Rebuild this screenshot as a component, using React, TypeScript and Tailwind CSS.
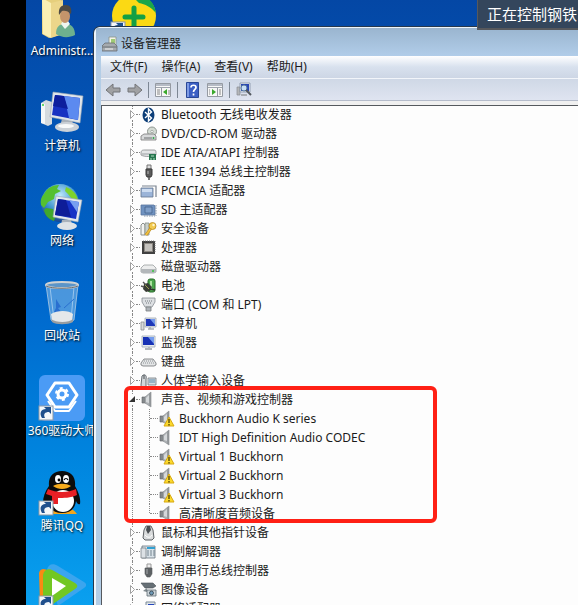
import React from 'react';
import clsx from 'clsx';

const ShortcutArrow = () => (
  <g>
    <rect x="1" y="32" width="14" height="14" fill="#f4f7fa" stroke="#8b98a5" />
    <path d="M4 44c-3-5-1-9 4-9l-2-2h7v7l-2-2c-4 0-6 2-4 6z" fill="#1f4f8c" />
  </g>
);

const UserFolder = () => (
  <>
    <path d="M4 4h15l6 3v33l-14 4-7-4z" fill="#e6cf7c" />
    <path d="M4 4l9 5v35l-8-4z" fill="#fbf0b4" />
    <path d="M13 9l12-3v34l-12 4z" fill="#ecd68a" />
    <path d="M18 40c0-7 3-10 9-10s10 3 10 11c-6 3-13 3-19-1z" fill="#6db08e" />
    <path d="M23 30l4 5 5-5-2-3h-5z" fill="#eef6f0" />
    <ellipse cx="27" cy="22" rx="5" ry="7" fill="#c4946b" />
    <path d="M21 21c-1-8 3-10 7-10 5 0 6 5 5 9-3-3-6-4-9-3z" fill="#4d4a44" />
  </>
);

const Computer = () => (
  <>
    <path d="M3 14l5-3 6 2v22l-4 2-7-3z" fill="#d5dade" />
    <path d="M3 14l4 1v20l-4-1z" fill="#f5f7f8" />
    <circle cx="5" cy="16" r="1" fill="#36d13c" />
    <path d="M24 30h10l1 7H22z" fill="#aab2bb" />
    <ellipse cx="29" cy="38" rx="12" ry="5" fill="#cbd1d7" />
    <ellipse cx="28" cy="37" rx="8" ry="2" fill="#f7f9fa" />
    <path d="M15 3l30 4-3 27-30-6z" fill="#dfe5ea" stroke="#9aa6b2" strokeWidth=".6" />
    <path d="M17 6l25 3-2 22-26-5z" fill="#1732c2" />
    <path d="M26 7l16 2-2 22-9-2z" fill="#5c8af0" />
    <path d="M17 6l9 1 4 13-15-3z" fill="#0d1e9d" />
  </>
);

const Network = () => (
  <>
    <defs>
      <radialGradient id="globe" cx=".5" cy=".3" r=".7">
        <stop offset="0" stopColor="#bfeafa" />
        <stop offset=".6" stopColor="#3b91cc" />
        <stop offset="1" stopColor="#17448f" />
      </radialGradient>
    </defs>
    <circle cx="22" cy="19" r="19" fill="url(#globe)" />
    <path d="M6 10C9 4 15 1 21 1l-2 4 4 2-6 3-1 5-6 3-4 6-3-3c-1-4 0-8 3-11z" fill="#55c030" />
    <path d="M28 3c6 2 11 7 12 13l-6-1-4-5-3-3z" fill="#7dd32c" />
    <path d="M8 24l7 1 3 6-2 6c-6-2-9-6-10-11z" fill="#40a82d" />
    <path d="M24 36h9l1 5H23z" fill="#aab2bb" />
    <ellipse cx="29" cy="42" rx="10" ry="4" fill="#dfe3e6" />
    <path d="M18 12l26 4-4 22-25-5z" fill="#e3e8ec" stroke="#98a5b0" strokeWidth=".6" />
    <path d="M20 15l21 3-3 17-21-4z" fill="#1733c6" />
    <path d="M20 15l8 1 5 17-16-2z" fill="#0e1d98" />
    <path d="M31 16l10 2-2 10z" fill="#779ff1" />
  </>
);

const RecycleBin = () => (
  <>
    <path d="M8 6l5 35c4 4 18 4 23 0l4-35z" fill="#a4d0f1" fillOpacity=".45" stroke="#c5d5e2" strokeWidth=".7" />
    <path d="M12 8l4 33M36 8l-3 33" stroke="#e6f2fb" strokeOpacity=".5" />
    <path d="M18 20l5 8-3 1 4 5-8-1 2-4z" fill="#2a6fd0" />
    <path d="M36 20l-10 9" stroke="#2a6fd0" />
    <path d="M13 35c6-4 18-4 22 0l-1 7c-5 3-15 3-20 0z" fill="#e5e8ea" />
    <path d="M13 40c5 4 18 4 22 0v3c-5 3-17 3-21 0z" fill="#989da1" />
    <ellipse cx="24" cy="6" rx="16" ry="3" fill="#5c95c8" stroke="#cfd2d3" strokeWidth="2" />
    <path d="M8 7c6 3 26 3 32 0" fill="none" stroke="#686e74" />
  </>
);

const DriverMaster = () => (
  <>
    <rect x="1" y="1" width="46" height="46" rx="6" fill="#4b9bf5" />
    <path d="M17 9h14l8 12-8 12H17L9 21z" fill="none" stroke="#fff" strokeWidth="3" strokeLinejoin="round" />
    <path d="M10 27l7 10h14l7-10" fill="none" stroke="#fff" strokeWidth="2" strokeLinejoin="round" />
    <circle cx="24" cy="20" r="4" fill="none" stroke="#fff" strokeWidth="3" />
    <circle cx="24" cy="20" r="6" fill="none" stroke="#fff" strokeWidth="2" strokeDasharray="3 3.3" />
    <ShortcutArrow />
  </>
);

const Penguin = () => (
  <>
    <path d="M12 44c3-3 8-3 12 0zM24 44c3-4 10-4 13 0z" fill="#f4a61c" stroke="#f4a61c" strokeWidth="2" />
    <path d="M24 2c9 0 14 6 13 15 3 5 6 12 5 18-2 1-3-1-4-3-1 8-6 12-14 12S11 40 9 32c-1 2-3 4-4 2 0-6 2-12 6-17C10 8 15 2 24 2z" fill="#0c0c0c" />
    <ellipse cx="25" cy="32" rx="11" ry="11" fill="#fff" />
    <path d="M10 20c8 4 20 4 28 0l1 6c-6 3-14 3-19 3v6h-6v-8l-6-2z" fill="#e71f25" />
    <ellipse cx="20" cy="10" rx="3" ry="4" fill="#fff" />
    <ellipse cx="28" cy="10" rx="3" ry="4" fill="#fff" />
    <circle cx="21" cy="11" r="1.4" />
    <path d="M26 11c1-2 3-2 4 0" fill="none" stroke="#000" strokeWidth="1.2" />
    <path d="M15 17c5-3 13-3 18 0-5 4-13 4-18 0z" fill="#f8ac1c" />
    <ShortcutArrow />
  </>
);

const VideoPlayer = () => (
  <>
    <path d="M9 6c1-6 6-7 11-4l26 16c3 2 3 4 0 6L20 42z" fill="#3ba5ee" />
    <path d="M1 9c1-5 6-5 9-2l4 34H2z" fill="#f98a13" />
    <path d="M5 11c1-6 6-7 11-4l21 12c3 2 3 4 0 6L12 42c-4 1-7 0-7-4z" fill="#72c723" />
    <path d="M14 14l14 8-14 10z" fill="#fff" />
    <ShortcutArrow />
  </>
);

const desktopItems = [
  { label: 'Administr...', icon: <UserFolder /> },
  { label: '计算机', icon: <Computer /> },
  { label: '网络', icon: <Network /> },
  { label: '回收站', icon: <RecycleBin /> },
  { label: '360驱动大师', icon: <DriverMaster /> },
  { label: '腾讯QQ', icon: <Penguin /> },
];

// 16x16 device class glyphs
const deviceIcons: Record<string, React.ReactNode> = {
  bluetooth: (
    <>
      <ellipse cx="7.5" cy="8" rx="6" ry="7.5" fill="#0d3e78" />
      <path d="M4 5l6.5 6-3 3V2l3 3L4 11" fill="none" stroke="#fff" strokeWidth="1.4" />
    </>
  ),
  disc: (
    <>
      <circle cx="11" cy="5.5" r="4.5" fill="#d4dbd4" stroke="#8e9690" />
      <circle cx="11" cy="5.5" r="1.2" fill="#fff" stroke="#7c857e" strokeWidth=".6" />
      <path d="M0 10l3-2h10l2 2v4H0z" fill="#d7d9da" stroke="#777" strokeWidth=".8" />
      <path d="M3 12h8" stroke="#6c7073" />
      <circle cx="12.5" cy="12" r="1" fill="#2fa54a" />
    </>
  ),
  ide: (
    <>
      <path d="M0 8c0-3 2-3 4-3h9c2 0 2 1 2 3v2c-3 2-12 2-15 0z" fill="#e4e6e7" stroke="#85898c" strokeWidth=".8" />
      <path d="M1 9h13" stroke="#9ba0a3" />
      <path d="M8 9h7v6H8z" fill="#27764f" />
      <path d="M10 13v2M13 13v2M10 11h3" stroke="#b4dfc3" />
    </>
  ),
  firewire: (
    <>
      <path d="M6 1h4v4H6z" fill="#ddd" stroke="#777" />
      <path d="M5 5h6v6l-1 2H6l-1-2z" fill="#5b5b5b" stroke="#3b3b3b" />
      <path d="M8 13v3" stroke="#555" strokeWidth="1.6" />
      <path d="M7 7v3" stroke="#bbb" />
    </>
  ),
  card: (
    <>
      <path d="M1 3h14v11" fill="none" stroke="#7b8490" strokeWidth="1.2" />
      <path d="M0 5h12v9H0z" fill="#9bb4d8" stroke="#62748e" strokeWidth=".8" />
      <path d="M1 6h10v3H1z" fill="#cddcf0" />
    </>
  ),
  sd: (
    <>
      <path d="M0 3h13l1 1v9H0z" fill="#6f92c0" stroke="#58759d" strokeWidth=".8" />
      <path d="M4 5h7v6H4z" fill="#7f9fc9" stroke="#3c5a82" strokeWidth=".7" />
      <path d="M15 3v11M3 14h11" stroke="#8797ab" strokeDasharray="1.5 1" />
    </>
  ),
  security: (
    <>
      <path d="M0 14h4V4L2 2 0 4z" fill="#f3f4f2" stroke="#8d918d" />
      <path d="M4 2h4v12H4z" fill="#c9d0cb" stroke="#868d88" strokeWidth=".8" />
      <path d="M10 7l-5 7" stroke="#b98a20" strokeWidth="3" />
      <path d="M10 7l-5 7" stroke="#f0c040" strokeWidth="1.8" />
      <circle cx="11.5" cy="5" r="3.5" fill="#f3cb4f" stroke="#b98a20" strokeWidth=".8" />
      <circle cx="12.5" cy="4" r="1.2" fill="#fff6cf" />
    </>
  ),
  cpu: (
    <>
      <rect x="1" y="1" width="13" height="13" fill="#404040" />
      <rect x="3.500" y="3.500" width="8" height="8" fill="#c4c2be" stroke="#8a8680" />
      <path d="M2 1h12v12" fill="none" stroke="#777" strokeDasharray="1 1" />
    </>
  ),
  drive: (
    <>
      <path d="M0 9l3-3h9l3 3v4l-2 1H2l-2-1z" fill="#eceded" stroke="#9b9ea0" strokeWidth=".8" />
      <path d="M0 10h15v3l-2 1H2l-2-1z" fill="#b3b7ba" />
      <circle cx="12" cy="12" r="1" fill="#36c43d" />
    </>
  ),
  battery: (
    <>
      <rect x="7" y="1" width="7" height="13" rx="2" fill="#4ba74c" stroke="#2b6b2d" />
      <path d="M9 3h2v8H9z" fill="#abe2a0" />
      <path d="M3 6l4-1 4 4-2 4-4 1-3-3z" fill="#383d35" />
      <path d="M2 4l3 3M0 8l3 1" stroke="#555" strokeWidth="1.4" />
      <path d="M4 7l4 4" stroke="#9b9b50" />
      <path d="M9 11l5 1" stroke="#2d322c" strokeWidth="1.4" />
    </>
  ),
  port: (
    <>
      <path d="M1 1h13v4l-3 5H4L1 5z" fill="#dcdfe2" stroke="#868c92" strokeWidth=".8" />
      <path d="M4 4h8M5 6h6" stroke="#747a80" strokeDasharray="1 1" />
      <path d="M5 10h5v4H5z" fill="#aeb3b8" stroke="#787d82" strokeWidth=".8" />
    </>
  ),
  computer: (
    <>
      <path d="M0 6h3v8H0z" fill="#d8dadb" stroke="#898c90" strokeWidth=".8" />
      <path d="M4 2h11v9H4z" fill="#e5e7ea" stroke="#9da6b1" strokeWidth=".8" />
      <path d="M5 3h9v7H5z" fill="#1e37b8" />
      <path d="M9 3h5v6z" fill="#7399ec" />
      <path d="M7 13h6M9 11v2" stroke="#a8adb2" strokeWidth="1.5" />
    </>
  ),
  monitor: (
    <>
      <path d="M1 1h13v11H1z" fill="#e8ebee" stroke="#9ca8b5" strokeWidth=".8" />
      <path d="M2 2h11v8H2z" fill="#1732b5" />
      <path d="M7 2h6v7z" fill="#739bed" />
      <path d="M4 14h7M8 12v2" stroke="#b2b7bc" strokeWidth="1.8" />
    </>
  ),
  keyboard: (
    <>
      <path d="M0 9l3-4h9l3 4v2l-2 1H2l-2-1z" fill="#e3e5e6" stroke="#6e7275" strokeWidth=".8" />
      <path d="M3 7h10M2 9h12" stroke="#8b9094" strokeDasharray="1 1" />
    </>
  ),
  hid: (
    <>
      <path d="M1 3c3-3 5 0 4 3v8c-2 2-5 0-5-2z" fill="#d3d7da" stroke="#686e73" />
      <path d="M3 2v4" stroke="#454a4e" />
      <path d="M7 5h8v7H7z" fill="#d4dbe1" stroke="#71797f" strokeWidth=".8" />
      <path d="M8 7h6M8 9h6" stroke="#5b89a8" />
      <path d="M7 14h8" stroke="#848b90" />
    </>
  ),
  sound: (
    <>
      <path d="M1 5h4v6H1z" fill="#85898c" stroke="#5e6265" strokeWidth=".6" />
      <path d="M4 5l6-5v15l-6-4z" fill="#adb1b4" stroke="#84888b" strokeWidth=".6" />
      <path d="M5 6l3-3v8l-3-1z" fill="#d5d8da" />
      <path d="M9 1v13" stroke="#82868a" />
    </>
  ),
  mouse: (
    <>
      <path d="M5 1h5l2 4 1 8-2 2H4l-2-2 1-8z" fill="#dadcdd" stroke="#5d6164" />
      <path d="M6 1L5 5l2 4 3-4-1-4z" fill="#494e52" />
      <path d="M4 10c2 3 6 3 7 0" fill="none" stroke="#fff" />
    </>
  ),
  modem: (
    <>
      <path d="M1 2h13v12H1z" fill="#d9e2e8" stroke="#67747d" strokeWidth=".8" />
      <path d="M0 4h5v10H0z" fill="#dce1e5" stroke="#6e777d" strokeWidth=".7" />
      <path d="M6 4h8" stroke="#31a0d2" strokeWidth="2" />
      <path d="M6 7h8M6 9h8M6 11h8" stroke="#74848f" strokeDasharray="2 1" />
    </>
  ),
  usb: (
    <>
      <path d="M6 1h4v4H6z" fill="#eee" stroke="#999" />
      <path d="M4 5h7v6l-2 3H6l-2-3z" fill="#5d6164" stroke="#595c5e" strokeWidth=".6" />
      <path d="M6 6v5" stroke="#a8acae" />
    </>
  ),
  imaging: (
    <>
      <path d="M0 1h12l3 3-3 2H4z" fill="#666f75" stroke="#4b5358" strokeWidth=".6" />
      <path d="M2 9l4-3v4z" fill="#7f888d" />
      <path d="M6 8h9v6H6z" fill="#ccd4d9" stroke="#5e6971" strokeWidth=".8" />
      <circle cx="10.500" cy="11" r="2" fill="#6e9ab8" stroke="#222f38" strokeWidth=".7" />
    </>
  ),
  network: (
    <>
      <path d="M5 1h9v8H5z" fill="#dfe5ea" stroke="#7d8b98" />
      <path d="M7 3h6v4H7z" fill="#2546bd" />
      <path d="M1 7h9v7H1z" fill="#dfe5ea" stroke="#7d8b98" />
    </>
  ),
};

type Category = {
  icon: string;
  label: string;
  children?: { label: string; warning?: boolean }[];
};

const categories: Category[] = [
  { icon: 'bluetooth', label: 'Bluetooth 无线电收发器' },
  { icon: 'disc', label: 'DVD/CD-ROM 驱动器' },
  { icon: 'ide', label: 'IDE ATA/ATAPI 控制器' },
  { icon: 'firewire', label: 'IEEE 1394 总线主控制器' },
  { icon: 'card', label: 'PCMCIA 适配器' },
  { icon: 'sd', label: 'SD 主适配器' },
  { icon: 'security', label: '安全设备' },
  { icon: 'cpu', label: '处理器' },
  { icon: 'drive', label: '磁盘驱动器' },
  { icon: 'battery', label: '电池' },
  { icon: 'port', label: '端口 (COM 和 LPT)' },
  { icon: 'computer', label: '计算机' },
  { icon: 'monitor', label: '监视器' },
  { icon: 'keyboard', label: '键盘' },
  { icon: 'hid', label: '人体学输入设备' },
  {
    icon: 'sound',
    label: '声音、视频和游戏控制器',
    children: [
      { label: 'Buckhorn Audio K series', warning: true },
      { label: 'IDT High Definition Audio CODEC' },
      { label: 'Virtual 1 Buckhorn', warning: true },
      { label: 'Virtual 2 Buckhorn', warning: true },
      { label: 'Virtual 3 Buckhorn', warning: true },
      { label: '高清晰度音频设备' },
    ],
  },
  { icon: 'mouse', label: '鼠标和其他指针设备' },
  { icon: 'modem', label: '调制解调器' },
  { icon: 'usb', label: '通用串行总线控制器' },
  { icon: 'imaging', label: '图像设备' },
  { icon: 'network', label: '网络适配器' },
];

const menus = ['文件(F)', '操作(A)', '查看(V)', '帮助(H)'];

const DeviceIcon = ({ name, warning }: { name: string; warning?: boolean }) => (
  <svg viewBox="0 0 16 16" className="size-4 shrink-0 overflow-visible" aria-hidden="true">
    {deviceIcons[name]}
    {warning && (
      <g>
        <path d="M10 6l5 9H5z" fill="#fbd92c" stroke="#d8a810" strokeLinejoin="round" />
        <path d="M10 8v4M10 13v1.500" stroke="#3f3400" strokeWidth="1.2" />
      </g>
    )}
  </svg>
);

const CategoryRow = ({ item }: { item: Category }) => {
  const open = !!item.children;
  return (
    <li role="treeitem" aria-expanded={open} className="relative">
      <div className="flex h-[19px] items-center whitespace-nowrap">
        <button aria-label={item.label} className="flex h-full w-[7px] flex-col items-center">
          <span className="w-0 flex-1 border-l border-dotted border-[#888]" />
          <svg viewBox="0 0 7 11" className="h-[11px] w-[7px] shrink-0" aria-hidden="true">
            {open ? (
              <path d="M6 2v6H0z" fill="#333" />
            ) : (
              <path d="M1.500 1.500l4 4-4 4z" fill="#fff" stroke="#a0a0a0" />
            )}
          </svg>
          <span className="w-0 flex-1 border-l border-dotted border-[#888]" />
        </button>
        <span className="mr-px w-1 border-t border-dotted border-[#888]" />
        <DeviceIcon name={item.icon} />
        <span className="pl-1">{item.label}</span>
      </div>
      {item.children && (
        <>
          <ul role="group" className="ml-[3px] border-l border-dotted border-[#888] pl-4">
            {item.children.map((child, i) => (
              <li key={child.label} role="treeitem" className="flex h-[19px] items-center whitespace-nowrap">
                <span
                  className={clsx(
                    'self-start border-l border-dotted border-[#888]',
                    i === item.children!.length - 1 ? 'h-[9px]' : 'h-full',
                  )}
                />
                <span className="mr-px w-2 border-t border-dotted border-[#888]" />
                <DeviceIcon name="sound" warning={child.warning} />
                <span className="pl-1">{child.label}</span>
              </li>
            ))}
          </ul>
          {/* marker frame around the audio devices */}
          <div className="pointer-events-none absolute -top-1 bottom-0 -left-[5px] w-[313px] rounded-md border-4 border-[#ff2015]" />
        </>
      )}
    </li>
  );
};

const ArrowIcon = ({ flip }: { flip?: boolean }) => (
  <svg viewBox="0 0 16 14" className={clsx('h-[14px] w-4', flip && 'rotate-180')} aria-hidden="true">
    <path d="M1 7l7-6v4h7v4H8v4z" fill="#a0a1a3" stroke="#737578" strokeLinejoin="round" />
  </svg>
);

const PaneIcon = ({ right }: { right?: boolean }) => (
  <svg viewBox="0 0 16 14" className="h-[14px] w-4" aria-hidden="true">
    <path d="M.5.5h15v13H.5z" fill="#f7f7f7" stroke="#959aa2" />
    <path d="M1 2h14" stroke="#b5bbc5" strokeWidth="2" />
    <path d="M1 4.500h14" stroke="#9ea4ad" />
    {right ? (
      <>
        <path d="M10.500 5v8" stroke="#959aa2" />
        <path d="M12 7h2M12 9h2M12 11h2M2 7h1M2 9h1M2 11h1" stroke="#888" />
        <path d="M5 6l4 3-4 3z" fill="#3aa82c" />
      </>
    ) : (
      <>
        <path d="M6.500 5v8" stroke="#959aa2" />
        <path d="M2 7h3M2 9h3M2 11h3M14 7v5" stroke="#888" />
        <path d="M12 6L8 9l4 3z" fill="#3aa82c" />
      </>
    )}
  </svg>
);

const ScanIcon = () => (
  <svg viewBox="0 0 16 16" className="size-4" aria-hidden="true">
    <path d="M1 5h3v8H1z" fill="#b4b6b8" stroke="#8a8e93" strokeWidth=".7" />
    <path d="M4 1h10v9H4z" fill="#e6ebf2" stroke="#8592a5" strokeWidth=".8" />
    <path d="M5 2h8v7H5z" fill="#2846b4" />
    <circle cx="8" cy="6" r="3" fill="#c7def5" stroke="#54789f" />
    <path d="M10 8l5 5" stroke="#53585f" strokeWidth="2" />
    <path d="M5 13h6" stroke="#999da2" strokeWidth="1.5" />
  </svg>
);

const Separator = () => <span className="h-4 w-px bg-[#7d8794]" />;

const Toolbar = () => (
  <div className="flex h-[22px] shrink-0 items-center border-t border-[#f2f5fa] bg-linear-to-b from-[#cfd8e6] to-[#dfe4f0] pl-1">
    <button aria-label="后退" className="mr-[6px]"><ArrowIcon /></button>
    <button aria-label="前进" className="mr-[5px]"><ArrowIcon flip /></button>
    <Separator />
    <button aria-label="显示/隐藏控制台树" className="mx-[6px]"><PaneIcon /></button>
    <Separator />
    <button aria-label="帮助" className="mx-2">
      <svg viewBox="0 0 13 16" className="h-4 w-[13px]" aria-hidden="true">
        <path d="M.5.5h12v15H.5z" fill="#3b5fc4" stroke="#294796" />
        <path d="M1 1h2v14H1z" fill="#7d9ae4" />
        <path d="M5 5.500c0-3 5-3 5 0 0 2-2.500 2-2.500 4.500M7.500 11.500v2" fill="none" stroke="#fff" strokeWidth="1.7" />
      </svg>
    </button>
    <button aria-label="显示/隐藏操作窗格" className="mr-[6px]"><PaneIcon right /></button>
    <Separator />
    <button aria-label="扫描检测硬件改动" className="ml-[6px]"><ScanIcon /></button>
  </div>
);

const DeviceManager = () => (
  <main className="relative z-10 mt-[27px] flex min-w-0 flex-1 flex-col rounded-tl-md border-t border-l-2 border-[#eef5fb] bg-[#b3cde6] pl-[5px] shadow-[0_0_0_1px_#26384c]">
    <header className="-ml-[5px] flex h-7 shrink-0 items-center gap-[3px] bg-linear-to-b from-[#9ab5cf] to-[#b1cde9] pt-1 pl-[6px]">
      <svg viewBox="0 0 16 16" className="size-4" aria-hidden="true">
        <path d="M7 1h7v9H7z" fill="#f4f4e8" stroke="#8b9388" strokeWidth=".8" />
        <path d="M9 3h4v4H9z" fill="#9fca76" />
        <path d="M0 10l3-3h9l3 3v5H0z" fill="#a5aaae" stroke="#686d71" strokeWidth=".8" />
        <path d="M0 11h15" stroke="#6d7276" />
        <path d="M3 13h8" stroke="#f1f2f3" />
      </svg>
      <h1>设备管理器</h1>
    </header>
    <nav className="flex h-[22px] shrink-0 items-center gap-[14px] bg-linear-to-b from-white via-[#d8e1ee] to-[#cdd6e5] pl-[9px]">
      {menus.map((m) => (
        <button key={m}>{m}</button>
      ))}
    </nav>
    <Toolbar />
    <div className="h-[5px] shrink-0 border-t border-[#b5bccb] bg-[#f0f0f0]" />
    <section className="min-h-0 flex-1 overflow-hidden border-t border-l border-[#55595e] bg-[#fdfdfd]">
      <ul role="tree" aria-label="设备" className="-mt-px pl-[27px]">
        {categories.map((item) => (
          <CategoryRow key={item.label} item={item} />
        ))}
      </ul>
    </section>
  </main>
);

export default function App() {
  return (
    <div className="relative flex h-screen overflow-hidden bg-black font-['Noto_Sans','Noto_Sans_CJK_SC',sans-serif] text-[12px] leading-4 text-[#1b1b1b]">
      <div className="relative ml-[26px] flex min-w-0 flex-1 bg-linear-to-b from-[#0447a5] via-[#0068cd] to-[#0aa0ef]">
        <ul className="-mt-[9px] flex w-[68px] shrink-0 flex-col pl-1">
          {desktopItems.map((item) => (
            <li key={item.label} className="h-[95px] shrink-0 pt-[3px]">
              <button className="flex w-full flex-col items-center gap-px whitespace-nowrap text-white [text-shadow:1px_1px_2px_#000]">
                <svg viewBox="0 0 48 48" className="size-12 shrink-0" aria-hidden="true">
                  {item.icon}
                </svg>
                <span>{item.label}</span>
              </button>
            </li>
          ))}
          <li className="pt-[3px]">
            <button aria-label="视频播放器" className="flex w-full justify-center">
              <svg viewBox="0 0 48 48" className="size-12 shrink-0" aria-hidden="true">
                <VideoPlayer />
              </svg>
            </button>
          </li>
        </ul>
        <button aria-label="360安全卫士" className="absolute -top-[10px] left-[84px]">
          <svg viewBox="0 0 48 48" className="size-12" aria-hidden="true">
            <circle cx="24" cy="26" r="22" fill="#fbd914" />
            <path d="M20 4c12-2 24 5 26 19-5-6-11-9-17-10z" fill="#1aa64a" />
            <path d="M24 18v18M15 27h18" stroke="#14a044" strokeWidth="5" strokeLinecap="round" />
            <ShortcutArrow />
          </svg>
        </button>
        <DeviceManager />
      </div>
      <div
        role="status"
        className="absolute top-0 right-0 z-20 h-[30px] w-[101px] overflow-hidden border-b-2 border-l border-[#56585c] bg-[#34465c] pt-1 pl-[9px] text-[15px] leading-5 whitespace-nowrap text-white"
      >
        正在控制钢铁
      </div>
    </div>
  );
}
